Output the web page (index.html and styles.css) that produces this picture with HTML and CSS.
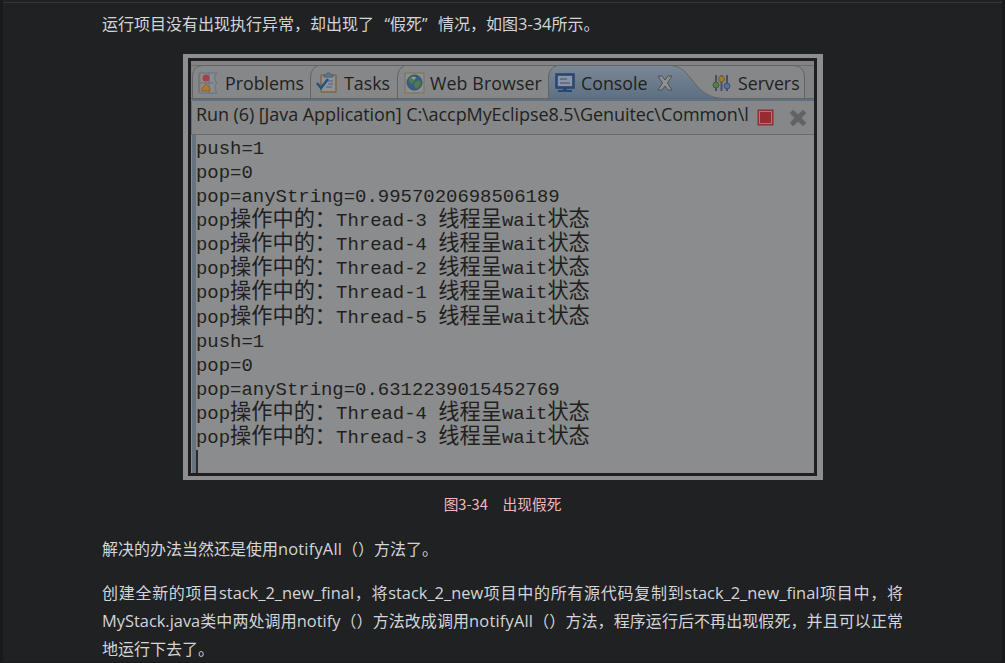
FILE: index.html
```html
<!DOCTYPE html>
<html lang="zh-CN">
<head>
  <meta charset="UTF-8" />
  <meta name="viewport" content="width=device-width, initial-scale=1" />
  <title>出现假死</title>
  <link rel="stylesheet" href="styles.css">
</head>
<body>

  <div class="page">
    <div class="content">
      <p class="intro">运行项目没有出现执行异常，却出现了<span class="quote">“</span>假死<span class="quote close">”</span>情况，如图<span class="en">3-34</span>所示。</p>

      <div class="figure">
        <div class="window">
          <div class="tabs">
            <svg class="tabs-bg" width="623" height="40" viewBox="0 0 623 40">
              <defs>
                <linearGradient id="active" x1="0" y1="0" x2="0" y2="1">
                  <stop offset="0" stop-color="#7b8794" />
                  <stop offset="1" stop-color="#5d7084" />
                </linearGradient>
              </defs>
              <path d="M0 4.5H623" stroke="#6a6a6c" />
              <path d="M1.500 37V15Q2 5 12 4.500H603Q613 5 613.500 16V37" fill="#868789" stroke="#626365" />
              <path d="M119.500 37V16Q120 7 127 4.500M206.500 37V16Q207 7 214 4.500" fill="none" stroke="#626365" />
              <path d="M0 37.500H623" stroke="#626365" />
              <path d="M357 37.500V16Q358 7 366 4.500H478C503 4.500 500 37 533 37.500Z" fill="url(#active)" />
              <path d="M357.500 37V16Q358 7 366 4.500H478C503 4.500 500 37 533 37.500" fill="none" stroke="#5f656b" />
              <rect x="1" y="38" width="622" height="2.500" fill="#5e7082" />
            </svg>
            <div class="tab problems">
              <svg width="20" height="22" viewBox="0 0 20 22">
                <path d="M1 1H19Q15 4 17 8Q20 11 17 14Q16 18 19 21H1Z" fill="#8b8c8b" stroke="#62718a" />
                <path d="M11 1V21M1 11H16" fill="none" stroke="#62718a" />
                <path d="M1.500 1V21" stroke="#83735a" stroke-width="1.500" />
                <circle cx="8" cy="6" r="3.600" fill="#a34348" />
                <path d="M8 12L12 16V19H4V16Z" fill="#b0792d" stroke="#8b622e" />
              </svg>
              <span>Problems</span>
            </div>
            <div class="tab tasks">
              <svg width="22" height="22" viewBox="0 0 22 22">
                <rect x="5" y="3" width="15" height="17" rx="1" fill="#8e9198" stroke="#806641" stroke-width="1.500" />
                <path d="M8 5V3H10L11 1H14L15 3H17V5Z" fill="#607491" stroke="#4f6179" />
                <path d="M12 9H17M12 12H17M10 15H16" stroke="#4f6284" stroke-width="1.200" />
                <path d="M1 11L5 16L12 7" fill="none" stroke="#24527f" stroke-width="2.500" />
              </svg>
              <span>Tasks</span>
            </div>
            <div class="tab browser">
              <svg width="21" height="22" viewBox="0 0 21 22">
                <rect x="1" y="1" width="19" height="20" fill="#8e8e8a" stroke="#77725e" />
                <circle cx="10.500" cy="10.500" r="7.500" fill="#315f85" stroke="#3a506a" />
                <path d="M5 6L10 4L12 7L8 12L5 10ZM11 10L16 8L17 12L12 17L10 13Z" fill="#53794c" />
                <path d="M7 5L12 5L10 8Z" fill="#93a39c" />
              </svg>
              <span>Web Browser</span>
            </div>
            <div class="tab console">
              <svg width="20" height="20" viewBox="0 0 20 20">
                <rect x="1.500" y="1.500" width="17" height="13" fill="#8b93a4" stroke="#274872" stroke-width="2.600" />
                <path d="M5 6H12M5 10H15" stroke="#3f5070" stroke-width="1.200" />
                <path d="M8 15H12V17H17V19H3V17H8Z" fill="#274872" />
              </svg>
              <span>Console</span>
              <svg class="close-icon" width="16" height="16" viewBox="0 0 16 16">
                <path d="M1 1H5L8 5L11 1H15L10.500 8L15 15H11L8 11L5 15H1L5.500 8Z" fill="#8e9092" stroke="#4d5257" />
              </svg>
            </div>
            <div class="tab servers">
              <svg width="19" height="18" viewBox="0 0 19 18">
                <path d="M4 1V17M9.500 1V17M15 1V17" stroke="#4b4d66" stroke-width="2" />
                <circle cx="4" cy="11" r="3" fill="#547f4a" stroke="#375d43" />
                <circle cx="9.500" cy="5" r="3" fill="#987c32" stroke="#735b2b" />
                <circle cx="15" cy="12" r="3" fill="#53729b" stroke="#344f79" />
              </svg>
              <span>Servers</span>
            </div>
          </div>

          <div class="toolbar">
            <span class="run-name">Run (6) [Java Application] C:\accpMyEclipse8.5\Genuitec\Common\l</span>
            <svg class="stop" width="17" height="17" viewBox="0 0 17 17">
              <rect x="1" y="1" width="15" height="15" fill="#9a2a32" stroke="#84353a" />
              <rect x="2.500" y="2.500" width="12" height="12" fill="none" stroke="#aa777a" />
            </svg>
            <svg class="remove" width="18" height="18" viewBox="0 0 18 18">
              <path d="M1 4L4 1L9 5.500L14 1L17 4L12.500 9L17 14L14 17L9 12.500L4 17L1 14L5.500 9Z" fill="#626262" stroke="#6d6d6d" />
            </svg>
          </div>

          <div class="output">
            <div>push=1</div>
            <div>pop=0</div>
            <div>pop=anyString=0.9957020698506189</div>
            <div>pop<b>操作中的：</b>Thread-3 <b>线程呈</b>wait<b>状态</b></div>
            <div>pop<b>操作中的：</b>Thread-4 <b>线程呈</b>wait<b>状态</b></div>
            <div>pop<b>操作中的：</b>Thread-2 <b>线程呈</b>wait<b>状态</b></div>
            <div>pop<b>操作中的：</b>Thread-1 <b>线程呈</b>wait<b>状态</b></div>
            <div>pop<b>操作中的：</b>Thread-5 <b>线程呈</b>wait<b>状态</b></div>
            <div>push=1</div>
            <div>pop=0</div>
            <div>pop=anyString=0.6312239015452769</div>
            <div>pop<b>操作中的：</b>Thread-4 <b>线程呈</b>wait<b>状态</b></div>
            <div>pop<b>操作中的：</b>Thread-3 <b>线程呈</b>wait<b>状态</b></div>
            <div class="caret"></div>
          </div>
        </div>
      </div>

      <p class="caption">图3-34　出现假死</p>

      <p>解决的办法当然还是使用<span class="en wide">notifyAll</span>（）方法了。</p>

      <p class="last">
        <span class="line">创建全新的项目<span class="en">stack_2_new_final</span>，将<span class="en">stack_2_new</span>项目中的所有源代码复制到<span class="en">stack_2_new_final</span>项目中，将</span>
        <span class="line"><span class="en">MyStack.java</span>类中两处调用<span class="en">notify</span>（）方法改成调用<span class="en wide">notifyAll</span>（）方法，程序运行后不再出现假死，并且可以正常</span>
        <span class="line end">地运行下去了。</span>
      </p>
    </div>
  </div>

</body>
</html>
```

FILE: styles.css
```css
body {
  margin: 0;
  background: #191a1c;
  font-family: "Noto Sans CJK SC", sans-serif;
}
.page {
  box-sizing: border-box;
  height: 662px;
  margin: 0 3px;
  padding-top: 2px;
  background: #202123;
  overflow: hidden;
}
.content {
  border-top: 1px solid #343537;
  padding: 6px 99px 0;
}
p {
  margin: 0 0 16px;
  color: #d3d5d8;
  font-size: 16px;
  line-height: 28px;
  white-space: nowrap;
  text-spacing-trim: space-all;
}
.intro {
  height: 28px;
  margin-bottom: 17px;
}
.en {
  font-family: "Open Sans", sans-serif;
  font-size: 16.4px;
  line-height: 1;
}
.en.wide {
  letter-spacing: 0.2px;
}
.quote {
  display: inline-block;
  width: 16px;
  font-family: "Open Sans", sans-serif;
  line-height: 1;
  text-align: right;
}
.quote.close {
  text-align: left;
}
.figure {
  box-sizing: border-box;
  width: 640px;
  height: 426px;
  margin-left: 81px;
  padding: 4px 6px 4px 5px;
  background: #8d8e8e;
}
.window {
  height: 412px;
  border: 3px solid #211d20;
  background: #8b8c8d;
  color: #211f20;
  overflow: hidden;
}
.tabs {
  position: relative;
  display: grid;
  grid-template-columns: 119px 87px 151px 156px 110px;
  height: 40px;
  background: #828385;
}
.tabs-bg {
  position: absolute;
  top: 0;
  left: 0;
}
.tab {
  position: relative;
  display: flex;
  align-items: center;
  gap: 7px;
  padding: 3px 0 0 7px;
  font-family: "Open Sans", sans-serif;
  font-size: 17.8px;
  line-height: 30px;
  white-space: nowrap;
}
.tab svg {
  flex: none;
}
.tab.tasks { gap: 6px; padding-left: 6px; }
.tab.browser { gap: 5px; letter-spacing: 0.1px; }
.tab.console { gap: 6px; }
.tab.servers { padding-left: 8px; }
.close-icon {
  margin-left: 4px;
}
.toolbar {
  display: flex;
  align-items: center;
  box-sizing: border-box;
  height: 34px;
  padding-left: 4px;
  border-left: 1px solid #5e7082;
  border-bottom: 1px solid #6b6b6c;
  background: #868788;
}
.run-name {
  flex: none;
  width: 553px;
  margin-top: -7px;
  overflow: hidden;
  font-family: "Open Sans", sans-serif;
  font-size: 18px;
  letter-spacing: -0.08px;
  line-height: 28px;
  white-space: nowrap;
}
.stop {
  margin-left: 8px;
}
.remove {
  margin-left: 15px;
}
.output {
  height: 338px;
  margin-left: 1px;
  padding-top: 2px;
  border-left: 4px solid #667380;
  font-family: "Liberation Mono", monospace;
  font-size: 18.95px;
}
.output div {
  height: 24.08px;
  line-height: 24.08px;
  white-space: pre;
}
.output b {
  font-family: "Noto Sans CJK SC", sans-serif;
  font-size: 21.2px;
  font-weight: normal;
  line-height: 0;
}
.output .caret {
  width: 0;
  border-left: 2px solid #292a2c;
}
.caption {
  margin: 10px 0 16px;
  color: #f0b8bc;
  font-size: 14.7px;
  text-align: center;
}
.line {
  display: block;
  width: 801px;
  height: 28px;
  text-align: justify;
  text-align-last: justify;
  white-space: normal;
}
.line.end {
  text-align-last: left;
}
```
